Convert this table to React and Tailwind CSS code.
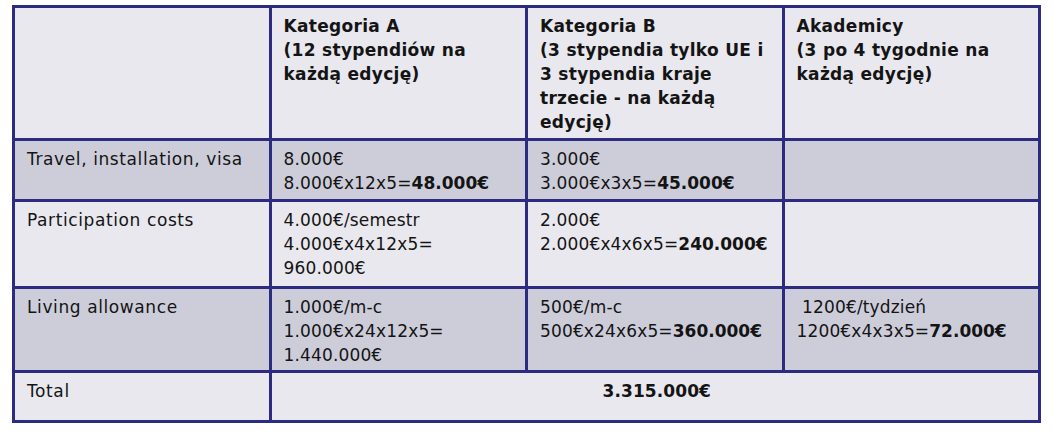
import React from "react";

const rows = [
  {
    label: "Travel, installation, visa",
    dark: true,
    h: "h-[61px]",
    cells: [
      [["8.000€"], ["8.000€x12x5=", "48.000€"]],
      [["3.000€"], ["3.000€x3x5=", "45.000€"]],
      [],
    ],
  },
  {
    label: "Participation costs",
    dark: false,
    h: "h-[87px]",
    cells: [
      [["4.000€/semestr"], ["4.000€x4x12x5="], ["960.000€"]],
      [["2.000€"], ["2.000€x4x6x5=", "240.000€"]],
      [],
    ],
  },
  {
    label: "Living allowance",
    dark: true,
    h: "h-[84px]",
    cells: [
      [["1.000€/m-c"], ["1.000€x24x12x5="], ["1.440.000€"]],
      [["500€/m-c"], ["500€x24x6x5=", "360.000€"]],
      [["\u00a01200€/tydzień"], ["1200€x4x3x5=", "72.000€"]],
    ],
  },
];

const td = "border-[3px] border-[#2d2b7f] align-top pl-[12px] pr-2 pt-[6px]";

function Lines({ lines }) {
  return lines.map((l, i) => (
    <div key={i}>
      {l[0]}
      {l[1] && <span className="font-bold tracking-normal">{l[1]}</span>}
    </div>
  ));
}

export default function App() {
  return (
    <div className="w-[1054px] h-[434px] bg-white pl-[12px] pt-[5px]">
      <table
        className="table-fixed border-collapse w-[1029px] text-[17px] leading-[24px] tracking-[0.6px] text-[#141414]"
        style={{ fontFamily: '"DejaVu Sans", Verdana, sans-serif' }}
      >
        <tbody>
          <tr className="h-[133px] bg-[#e8e8ee]">
            <td className={td}></td>
            <td className={td + " font-bold tracking-[0.3px]"}>
              <div>Kategoria A</div>
              <div>(12 stypendiów na</div>
              <div>każdą edycję)</div>
            </td>
            <td className={td + " font-bold tracking-[0.3px]"}>
              <div>Kategoria B</div>
              <div>(3 stypendia tylko UE i</div>
              <div>3 stypendia kraje</div>
              <div>trzecie - na każdą</div>
              <div>edycję)</div>
            </td>
            <td className={td + " font-bold tracking-[0.3px]"}>
              <div>Akademicy</div>
              <div>(3 po 4 tygodnie na</div>
              <div>każdą edycję)</div>
            </td>
          </tr>
          {rows.map((r) => (
            <tr key={r.label} className={r.h + " " + (r.dark ? "bg-[#cdcdda]" : "bg-[#e8e8ee]")}>
              <td className={td}>{r.label}</td>
              {r.cells.map((c, i) => (
                <td key={i} className={td + " whitespace-pre tracking-[0.15px]"}>
                  <Lines lines={c} />
                </td>
              ))}
            </tr>
          ))}
          <tr className="h-[50px] bg-[#e8e8ee]">
            <td className={td}>Total</td>
            <td colSpan={3} className={td + " text-center font-bold tracking-[0.1px]"}>
              3.315.000€
            </td>
          </tr>
        </tbody>
      </table>
    </div>
  );
}
